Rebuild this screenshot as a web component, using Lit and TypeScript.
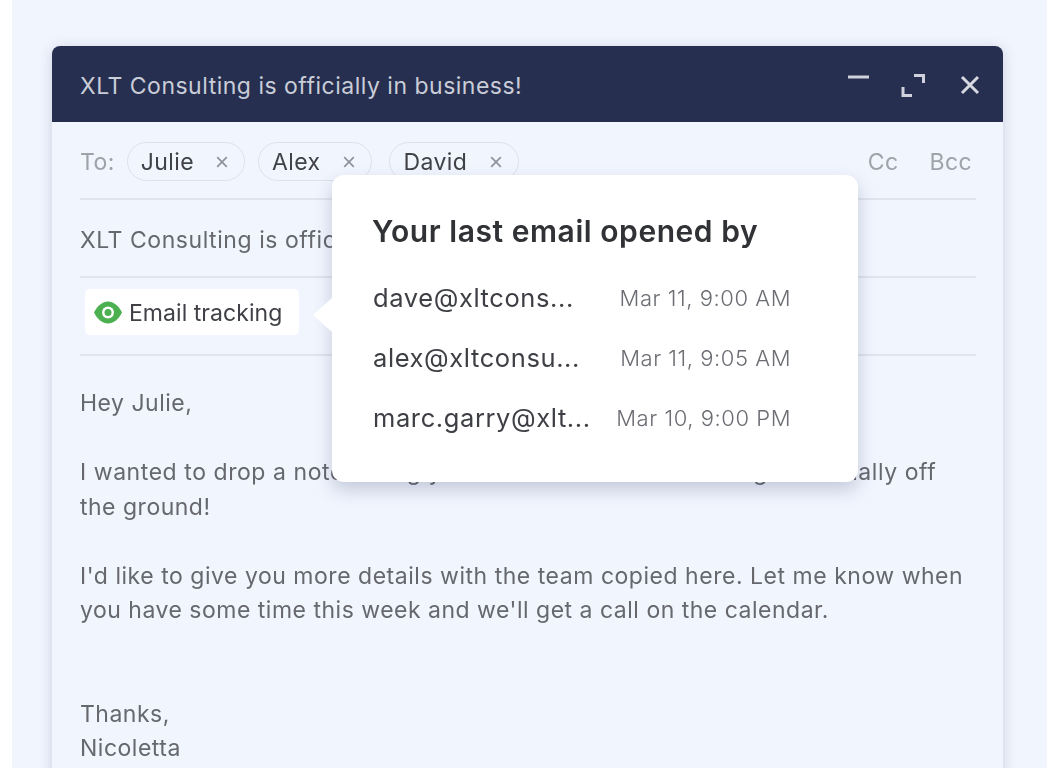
import { LitElement, html, css, svg } from "lit";
import { customElement } from "lit/decorators.js";

const chips = ["Julie", "Alex", "David"];
const opens = [
  ["dave@xltcons...", "Mar 11, 9:00 AM"],
  ["alex@xltconsu...", "Mar 11, 9:05 AM"],
  ["marc.garry@xlt...", "Mar 10, 9:00 PM"],
];

@customElement("app-root")
export class AppRoot extends LitElement {
  static styles = css`
    :host { display: block; width: 1059px; height: 768px; overflow: hidden; background: #fff; font-family: Inter, "Noto Sans", sans-serif; }
    .stage { margin: 0 12px; height: 768px; background: #f1f5fe; padding: 46px 44px 0 40px; box-sizing: border-box; overflow: hidden; }
    .wrap { position: relative; }
    .card { height: 800px; background: #f1f5fe; border-radius: 8px 8px 0 0; box-shadow: 0 2px 14px rgba(40,50,90,.18); filter: blur(.6px); }
    .head { height: 76px; background: #272f50; border-radius: 8px 8px 0 0; display: flex; align-items: center; justify-content: space-between; padding: 0 23px 0 28px; color: #c9cdd8; font-size: 23px; letter-spacing: .5px; }
    .head > span { margin-top: 4px; }
    .ctrls { display: flex; align-items: center; gap: 32px; margin-top: 2px; }
    .ctrls svg { display: block; }
    .ctrls .expand { margin-right: 3px; }
    .ctrls .close { margin-top: -1px; }
    .body { padding: 0 27px 0 28px; }
    .row { display: flex; align-items: center; border-bottom: 2px solid #e0e4ee; }
    .to { height: 78px; box-sizing: border-box; gap: 12px; font-size: 23px; letter-spacing: .4px; color: #a0a2a9; }
    .chip { display: flex; align-items: center; height: 39px; box-sizing: border-box; padding: 0 16px 0 13px; border: 1.5px solid #dde1ea; border-radius: 20px; color: #404248; }
    .chip svg { margin-left: 22px; }
    .chip + .chip svg { margin-left: 23px; }
    .chip:last-child { margin-left: 4px; padding-right: 16px; }
    .chips { display: flex; gap: 13px; flex: 1; margin-top: 3px; }
    .to > span { margin-top: 4px; }
    .cc { display: flex; gap: 31px; margin-right: 4px; margin-top: 4px; }
    .subject { height: 78px; box-sizing: border-box; padding-top: 4px; font-size: 23px; letter-spacing: .55px; color: #66686e; }
    .track { height: 78px; box-sizing: border-box; padding: 0 0 8px 5px; }
    .badge { display: flex; align-items: center; gap: 7px; height: 46px; width: 214px; box-sizing: border-box; padding-left: 9px; background: #fff; border-radius: 5px; font-size: 23px; letter-spacing: .05px; color: #3f4147; }
    .badge span { margin-top: 2px; }
    .msg { padding-top: 30px; color: #66686e; font-size: 23px; line-height: 34.5px; letter-spacing: .5px; }
    .msg p { margin: 0 0 34.5px; white-space: nowrap; }
    .msg .sig { margin-top: 69px; }
    .msg .wide { letter-spacing: .56px; }
    .msg .lead { letter-spacing: .525px; }
    .pop { position: absolute; left: 280px; top: 129px; width: 526px; height: 307px; box-sizing: border-box; padding: 35px 40px 0 40px; background: #fff; border-radius: 12px; box-shadow: 0 8px 18px rgba(40,50,90,.22); filter: blur(.25px); }
    .pop::before { content: ""; position: absolute; left: -19px; top: 123px; width: 0; height: 0; border-top: 17px solid transparent; border-bottom: 17px solid transparent; border-right: 19px solid #fff; }
    h2 { margin: 0 0 16px; font-size: 30px; line-height: 42px; font-weight: 600; letter-spacing: .55px; color: #303236; }
    .open { display: flex; align-items: center; justify-content: space-between; height: 60px; font-size: 25.5px; letter-spacing: .6px; color: #3d3f44; padding: 0 27px 0 1px; }
    .open span:first-child { margin-top: -2px; }
    .open span:last-child { font-size: 22px; letter-spacing: .55px; color: #6b6d73; font-weight: 300; }
  `;

  private x(size: number, color: string, w: number) {
    return html`<svg width=${size} height=${size} viewBox="0 0 10 10" fill="none" stroke=${color} stroke-width=${w}>${svg`<path d="M1 1L9 9M9 1L1 9"/>`}</svg>`;
  }

  render() {
    return html`<div class="stage"><div class="wrap">
      <div class="card">
        <div class="head">
          <span>XLT Consulting is officially in business!</span>
          <div class="ctrls">
            <svg width="21" height="24" viewBox="0 0 21 24" fill="none" stroke="#cfd2dc" stroke-width="3"><path d="M0 4H21"/></svg>
            <svg class="expand" width="24" height="24" viewBox="0 0 24 24" fill="none" stroke="#cfd2dc" stroke-width="3"><path d="M13 2.500H22.500V10M2 14V22.500H11"/></svg>
            <svg class="close" width="20" height="20" viewBox="0 0 20 20" fill="none" stroke="#d6d9e1" stroke-width="3"><path d="M2 2L18 18M18 2L2 18"/></svg>
          </div>
        </div>
        <div class="body">
          <div class="row to">
            <span>To:</span>
            <div class="chips">
              ${chips.map((c) => html`<div class="chip"><span>${c}</span>${this.x(12, "#8f929b", 1.4)}</div>`)}
            </div>
            <div class="cc"><span>Cc</span><span>Bcc</span></div>
          </div>
          <div class="row subject">XLT Consulting is officially in business!</div>
          <div class="row track">
            <div class="badge">
              <svg width="28" height="23" viewBox="0 0 28 23"><path fill="#4caf50" d="M0 11.500C3.500 4.500 8.500 0.500 14 0.500S24.500 4.500 28 11.500C24.500 18.500 19.500 22.500 14 22.500S3.500 18.500 0 11.500Z"/><circle cx="14" cy="11.500" r="6" fill="#fff"/><circle cx="14" cy="11.500" r="3.500" fill="#4caf50"/></svg>
              <span>Email tracking</span>
            </div>
          </div>
          <div class="msg">
            <p>Hey Julie,</p>
            <p><span class="wide">I wanted to drop a note letting you know that XLT Consulting is officially off</span><br>the ground!</p>
            <p><span class="lead">I'd like to give you more details with the team copied here. Let me know when</span><br>you have some time this week and we'll get a call on the calendar.</p>
            <p class="sig">Thanks,<br>Nicoletta</p>
          </div>
        </div>
      </div>
      <div class="pop">
        <h2>Your last email opened by</h2>
        ${opens.map(([a, b]) => html`<div class="open"><span>${a}</span><span>${b}</span></div>`)}
      </div>
    </div></div>`;
  }
}
